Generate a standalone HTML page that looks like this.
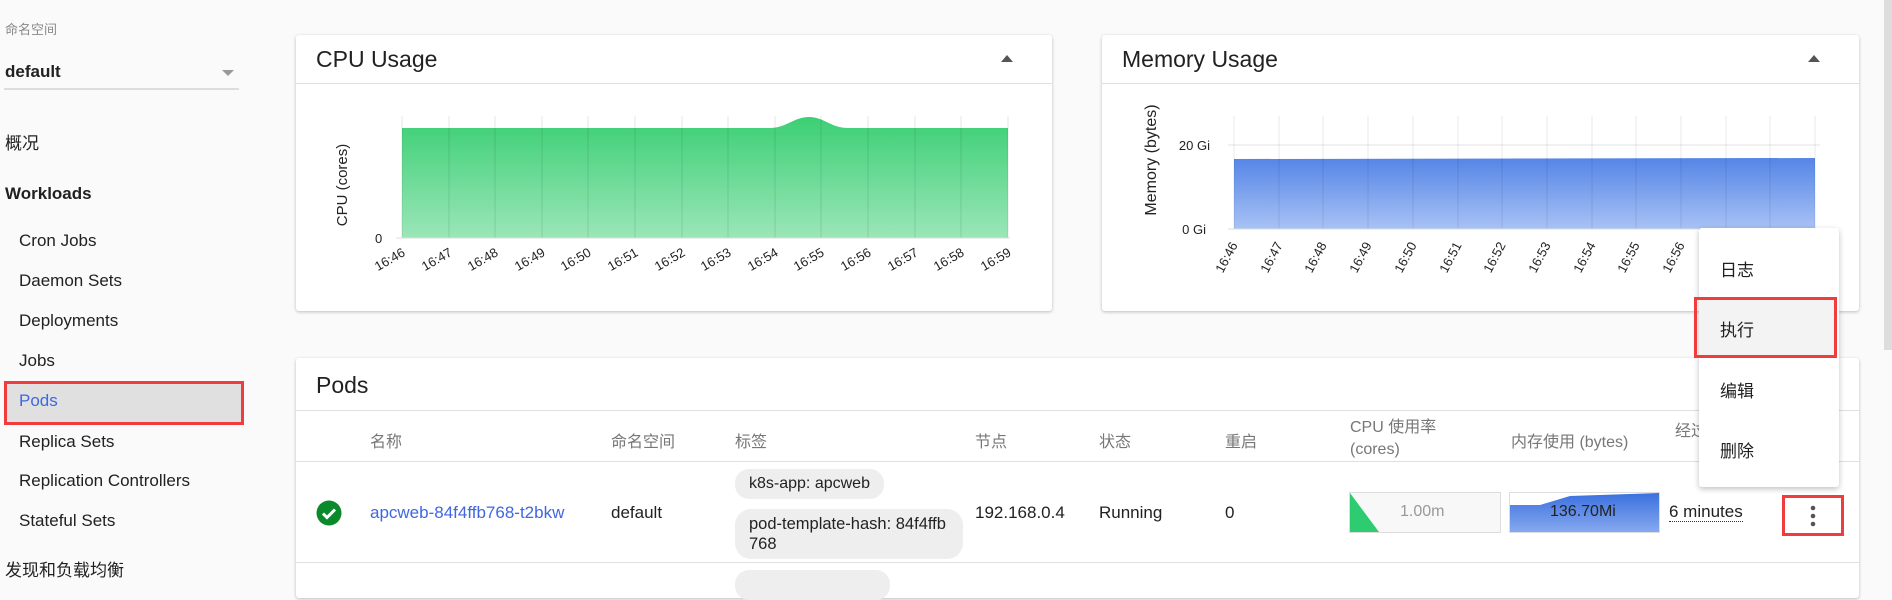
<!DOCTYPE html>
<html><head><meta charset="utf-8"><style>
*{box-sizing:border-box;margin:0;padding:0}
body{width:1892px;height:583px;overflow:hidden;background:#fafafa;font-family:"Liberation Sans","Noto Sans CJK SC",sans-serif;color:#212121;position:relative}
.a{position:absolute;white-space:nowrap}
.nav{font-size:17px;left:19px}
.card{position:absolute;background:#fff;border-radius:3px;box-shadow:0 1px 3px rgba(0,0,0,.25)}
.hd{position:absolute;left:0;right:0;border-bottom:1px solid #e0e0e0}
.th{font-size:16px;color:#777}
.td{font-size:17px}
.chip{position:absolute;background:#eee;border-radius:14px;font-size:16px;padding:5px 14px;line-height:20px;color:#222}
</style></head><body>
<div class="a" style="left:5px;top:19px;font-size:13px;color:#888">命名空间</div>
<div class="a" style="left:5px;top:62px;font-size:17px;font-weight:bold;color:#222">default</div>
<div class="a" style="left:222px;top:70px;width:0;height:0;border-left:6px solid transparent;border-right:6px solid transparent;border-top:6px solid #999"></div>
<div class="a" style="left:4px;top:88px;width:235px;height:2px;background:#ddd"></div>
<div class="a" style="left:5px;top:129px;font-size:17px">概况</div>
<div class="a" style="left:5px;top:184px;font-size:17px;font-weight:bold">Workloads</div>
<div class="a nav" style="top:231px">Cron Jobs</div>
<div class="a nav" style="top:271px">Daemon Sets</div>
<div class="a nav" style="top:311px">Deployments</div>
<div class="a nav" style="top:351px">Jobs</div>
<div class="a" style="left:4px;top:381px;width:240px;height:44px;background:#e0e0e0;border:3px solid #f03c3c"></div>
<div class="a nav" style="top:391px;color:#3f67e0">Pods</div>
<div class="a nav" style="top:432px">Replica Sets</div>
<div class="a nav" style="top:471px">Replication Controllers</div>
<div class="a nav" style="top:511px">Stateful Sets</div>
<div class="a" style="left:5px;top:556px;font-size:17px">发现和负载均衡</div>
<div class="a" style="left:1884px;top:0;width:8px;height:350px;background:#ddd"></div>

<div class="card" style="left:296px;top:35px;width:756px;height:276px">
<div class="hd" style="top:0;height:49px"></div>
<div class="a" style="left:20px;top:11px;font-size:23px">CPU Usage</div>
<div class="a" style="left:705px;top:20px;border-left:6px solid transparent;border-right:6px solid transparent;border-bottom:7px solid #555"></div>
</div>
<svg class="a" style="left:296px;top:35px" width="756" height="276" font-family="Liberation Sans" font-size="13" fill="#222">
<defs><linearGradient id="g" x1="0" y1="0" x2="0" y2="1"><stop offset="0" stop-color="#3ccf75"/><stop offset="1" stop-color="#9be6b8"/></linearGradient>
<linearGradient id="b" x1="0" y1="0" x2="0" y2="1"><stop offset="0" stop-color="#5585e6"/><stop offset="1" stop-color="#a8c2f5"/></linearGradient></defs>
<path d="M106 93 L474 93 C490 93 498 82 513 82 C528 82 535 93 552 93 L712 93 L712 203 L106 203Z" fill="url(#g)"/>
<g stroke="rgba(0,0,0,.1)"><path d="M106 81V203M153 81V203M199 81V203M246 81V203M292 81V203M339 81V203M386 81V203M432 81V203M479 81V203M525 81V203M572 81V203M619 81V203M665 81V203M712 81V203"/></g>
<path d="M100 203H714" stroke="#ddd"/>
<text x="79" y="208">0</text>
<text transform="translate(51,150) rotate(-90)" font-size="15" text-anchor="middle">CPU (cores)</text>
<g text-anchor="end">
<text transform="translate(110,220) rotate(-30)">16:46</text><text transform="translate(157,220) rotate(-30)">16:47</text><text transform="translate(203,220) rotate(-30)">16:48</text><text transform="translate(250,220) rotate(-30)">16:49</text><text transform="translate(296,220) rotate(-30)">16:50</text><text transform="translate(343,220) rotate(-30)">16:51</text><text transform="translate(390,220) rotate(-30)">16:52</text><text transform="translate(436,220) rotate(-30)">16:53</text><text transform="translate(483,220) rotate(-30)">16:54</text><text transform="translate(529,220) rotate(-30)">16:55</text><text transform="translate(576,220) rotate(-30)">16:56</text><text transform="translate(623,220) rotate(-30)">16:57</text><text transform="translate(669,220) rotate(-30)">16:58</text><text transform="translate(716,220) rotate(-30)">16:59</text>
</g></svg>

<div class="card" style="left:1102px;top:35px;width:757px;height:276px">
<div class="hd" style="top:0;height:49px"></div>
<div class="a" style="left:20px;top:11px;font-size:23px">Memory Usage</div>
<div class="a" style="left:706px;top:20px;border-left:6px solid transparent;border-right:6px solid transparent;border-bottom:7px solid #555"></div>
</div>
<svg class="a" style="left:1102px;top:35px" width="757" height="276" font-family="Liberation Sans" font-size="13" fill="#222">
<path d="M132 124 L713 123 L713 194 L132 194Z" fill="url(#b)"/>
<path d="M126 110H718" stroke="#e3e3e3"/>
<g stroke="rgba(0,0,0,.09)"><path d="M132 81V194M177 81V194M221 81V194M266 81V194M311 81V194M356 81V194M400 81V194M445 81V194M490 81V194M534 81V194M579 81V194M624 81V194M668 81V194M713 81V194"/></g>
<path d="M126 194H718" stroke="#ddd"/>
<text x="108" y="115" text-anchor="end">20 Gi</text><text x="104" y="199" text-anchor="end">0 Gi</text>
<text transform="translate(54,125) rotate(-90)" font-size="16" text-anchor="middle">Memory (bytes)</text>
<g text-anchor="end">
<text transform="translate(136,210) rotate(-62)">16:46</text><text transform="translate(181,210) rotate(-62)">16:47</text><text transform="translate(225,210) rotate(-62)">16:48</text><text transform="translate(270,210) rotate(-62)">16:49</text><text transform="translate(315,210) rotate(-62)">16:50</text><text transform="translate(360,210) rotate(-62)">16:51</text><text transform="translate(404,210) rotate(-62)">16:52</text><text transform="translate(449,210) rotate(-62)">16:53</text><text transform="translate(494,210) rotate(-62)">16:54</text><text transform="translate(538,210) rotate(-62)">16:55</text><text transform="translate(583,210) rotate(-62)">16:56</text>
</g></svg>

<div class="card" style="left:296px;top:358px;width:1563px;height:240px">
<div class="hd" style="top:0;height:53px"></div>
<div class="hd" style="top:53px;height:51px"></div>
<div class="hd" style="top:104px;height:101px"></div>
<div class="a" style="left:20px;top:14px;font-size:23px">Pods</div>
</div>
<div class="a th" style="left:370px;top:428px">名称</div>
<div class="a th" style="left:611px;top:428px">命名空间</div>
<div class="a th" style="left:735px;top:428px">标签</div>
<div class="a th" style="left:975px;top:428px">节点</div>
<div class="a th" style="left:1099px;top:428px">状态</div>
<div class="a th" style="left:1225px;top:428px">重启</div>
<div class="a th" style="left:1350px;top:417px;line-height:22px">CPU 使用率<br>(cores)</div>
<div class="a th" style="left:1511px;top:428px">内存使用 (bytes)</div>
<div class="a th" style="left:1675px;top:417px">经过</div>

<svg class="a" style="left:316px;top:500px" width="26" height="26"><circle cx="13" cy="13" r="12.5" fill="#0a8a2a"/><path d="M7 13.5l4 4 8-8" stroke="#fff" stroke-width="3" fill="none"/></svg>
<div class="a td" style="left:370px;top:503px;color:#3f67e0">apcweb-84f4ffb768-t2bkw</div>
<div class="a td" style="left:611px;top:503px">default</div>
<div class="chip" style="left:735px;top:469px">k8s-app: apcweb</div>
<div class="chip" style="left:735px;top:509px;width:228px;white-space:normal;word-break:break-all;border-radius:16px;font-size:16.5px">pod-template-hash: 84f4ffb768</div>
<div class="chip" style="left:735px;top:570px;width:155px;height:30px"></div>
<div class="a td" style="left:975px;top:503px">192.168.0.4</div>
<div class="a td" style="left:1099px;top:503px">Running</div>
<div class="a td" style="left:1225px;top:503px">0</div>
<div class="a" style="left:1349px;top:492px;width:152px;height:41px;border:1px solid #ddd;background:#f8f8f8">
<svg class="a" style="left:0;top:0" width="30" height="39"><path d="M0 0L29 39H0Z" fill="#2ecc71"/></svg>
<div class="a" style="left:50px;top:10px;font-size:16px;color:#999">1.00m</div></div>
<div class="a" style="left:1509px;top:492px;width:151px;height:41px;border:1px solid #ddd;background:#fff">
<svg class="a" style="left:0;top:0" width="149" height="39"><defs><linearGradient id="c" x1="0" y1="0" x2="0" y2="1"><stop offset="0" stop-color="#3c70e0"/><stop offset="1" stop-color="#86a9ee"/></linearGradient></defs><path d="M0 12H30L60 3L149 0V39H0Z" fill="url(#c)"/></svg>
<div class="a" style="left:40px;top:10px;font-size:16px;color:#222">136.70Mi</div></div>
<div class="a td" style="left:1669px;top:503px;border-bottom:1px dotted #333;line-height:18px">6 minutes</div>
<div class="a" style="left:1782px;top:495px;width:62px;height:41px;border:3px solid #f03c3c"></div>
<svg class="a" style="left:1807px;top:502px" width="12" height="28"><circle cx="6" cy="6" r="2.3" fill="#555"/><circle cx="6" cy="14" r="2.3" fill="#555"/><circle cx="6" cy="22" r="2.3" fill="#555"/></svg>

<div class="a" style="left:1699px;top:228px;width:140px;height:259px;background:#fff;border-radius:3px;box-shadow:0 2px 6px rgba(0,0,0,.25)"></div>
<div class="a" style="left:1699px;top:300px;width:138px;height:58px;background:#f3f3f3"></div>
<div class="a" style="left:1694px;top:297px;width:143px;height:61px;border:3px solid #f03c3c"></div>
<div class="a" style="left:1720px;top:256px;font-size:17px">日志</div>
<div class="a" style="left:1720px;top:316px;font-size:17px">执行</div>
<div class="a" style="left:1720px;top:377px;font-size:17px">编辑</div>
<div class="a" style="left:1720px;top:437px;font-size:17px">删除</div>
</body></html>
